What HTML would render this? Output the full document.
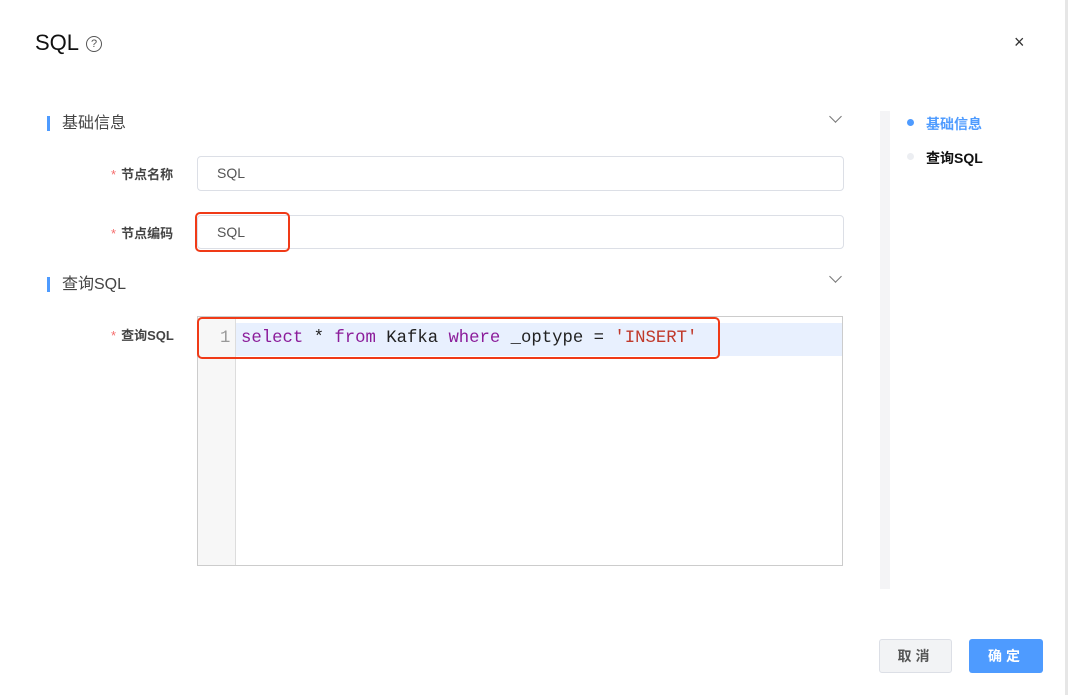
<!DOCTYPE html><html><head><meta charset="utf-8"><style>
body{margin:0;width:1068px;height:695px;background:#fff;position:relative;overflow:hidden;font-family:"Liberation Sans","Noto Sans CJK SC",sans-serif;color:#333}
.a{position:absolute}
.inp{position:absolute;border:1px solid #dcdfe6;border-radius:4px;background:#fff;box-sizing:border-box;font-size:14px;color:#555;padding-left:19px;line-height:32px}
.lbl{position:absolute;font-size:13px;font-weight:bold;color:#444}
.lbl b{color:#f56c6c;font-weight:normal;margin-right:5px}
.sec{position:absolute;left:47px;font-size:16px;color:#444;padding-left:12px;border-left:3px solid #4e9bff;line-height:15px}
.chev{position:absolute;width:8px;height:8px;border-right:1.3px solid #777;border-bottom:1.3px solid #777;transform:rotate(45deg)}
.code{font-family:"Liberation Mono",monospace;font-size:17.3px}
</style></head><body>
<div class="a" style="left:1065px;top:0;width:3px;height:695px;background:#e6e6e6"></div>
<div class="a" style="left:35px;top:30px;font-size:22px;color:#111">SQL</div>
<div class="a" style="left:86px;top:36px;width:14px;height:14px;border:1.3px solid #555;border-radius:50%;font-size:11px;line-height:14px;text-align:center;color:#555">?</div>
<div class="a" style="left:1014px;top:32px;font-size:18px;color:#333">×</div>
<div class="sec" style="top:116px">基础信息</div>
<div class="chev" style="left:831px;top:112px"></div>
<div class="lbl" style="left:111px;top:164px"><b>*</b>节点名称</div>
<div class="inp" style="left:197px;top:156px;width:647px;height:35px">SQL</div>
<div class="lbl" style="left:111px;top:223px"><b>*</b>节点编码</div>
<div class="inp" style="left:197px;top:215px;width:647px;height:34px">SQL</div>
<div class="a" style="left:195px;top:212px;width:91px;height:36px;border:2.5px solid #f03a17;border-radius:5px"></div>
<div class="sec" style="top:277px">查询SQL</div>
<div class="chev" style="left:831px;top:272px"></div>
<div class="lbl" style="left:111px;top:325px"><b>*</b>查询SQL</div>
<div class="a" style="left:197px;top:316px;width:646px;height:250px;border:1px solid #ccc;box-sizing:border-box;background:#fff">
<div class="a" style="left:0;top:0;width:37px;height:248px;background:#f7f7f7;border-right:1px solid #ddd"></div>
<div class="a" style="left:38px;top:6px;width:606px;height:33px;background:#e8f0fe"></div>
<div class="a code" style="left:22px;top:12px;color:#999">1</div>
<div class="a code" style="left:43px;top:12px;white-space:pre;color:#222"><span style="color:#8b1c9a">select</span> * <span style="color:#8b1c9a">from</span> Kafka <span style="color:#8b1c9a">where</span> _optype = <span style="color:#c0392b">'INSERT'</span></div>
</div>
<div class="a" style="left:197px;top:317px;width:519px;height:38px;border:2.5px solid #f03a17;border-radius:5px"></div>
<div class="a" style="left:880px;top:111px;width:10px;height:478px;background:#f4f4f6"></div>
<div class="a" style="left:907px;top:119px;width:7px;height:7px;border-radius:50%;background:#4e9bff"></div>
<div class="a" style="left:926px;top:114px;font-size:14px;font-weight:bold;color:#4e9bff">基础信息</div>
<div class="a" style="left:907px;top:153px;width:7px;height:7px;border-radius:50%;background:#eceef2"></div>
<div class="a" style="left:926px;top:148px;font-size:14px;font-weight:bold;color:#111">查询SQL</div>
<div class="a" style="left:879px;top:639px;width:73px;height:34px;box-sizing:border-box;border:1px solid #dcdfe6;border-radius:3px;background:#f2f3f5;color:#555;font-size:14px;font-weight:bold;text-align:center;line-height:32px;letter-spacing:4px">取消</div>
<div class="a" style="left:969px;top:639px;width:74px;height:34px;border-radius:3px;background:#4e9bff;color:#fff;font-size:14px;font-weight:bold;text-align:center;line-height:34px;letter-spacing:4px">确定</div>
</body></html>
